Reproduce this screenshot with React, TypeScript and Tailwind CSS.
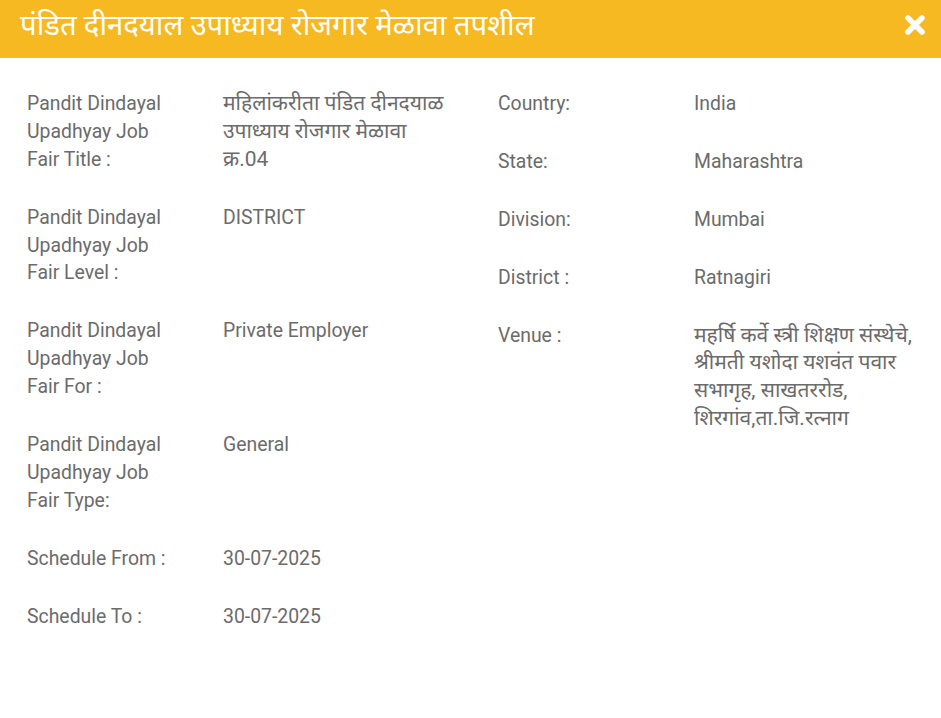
import React from 'react';

type Row = { label: string[]; value: string[]; deva?: boolean };

const left: Row[] = [
  {
    label: ['Pandit Dindayal', 'Upadhyay Job', 'Fair Title :'],
    value: ['महिलांकरीता पंडित दीनदयाळ', 'उपाध्याय रोजगार मेळावा', 'क्र.04'],
    deva: true,
  },
  { label: ['Pandit Dindayal', 'Upadhyay Job', 'Fair Level :'], value: ['DISTRICT'] },
  { label: ['Pandit Dindayal', 'Upadhyay Job', 'Fair For :'], value: ['Private Employer'] },
  { label: ['Pandit Dindayal', 'Upadhyay Job', 'Fair Type:'], value: ['General'] },
  { label: ['Schedule From :'], value: ['30-07-2025'] },
  { label: ['Schedule To :'], value: ['30-07-2025'] },
];

const right: Row[] = [
  { label: ['Country:'], value: ['India'] },
  { label: ['State:'], value: ['Maharashtra'] },
  { label: ['Division:'], value: ['Mumbai'] },
  { label: ['District :'], value: ['Ratnagiri'] },
  {
    label: ['Venue :'],
    value: ['महर्षि कर्वे स्त्री शिक्षण संस्थेचे,', 'श्रीमती यशोदा यशवंत पवार', 'सभागृह, साखतररोड,', 'शिरगांव,ता.जि.रत्नाग'],
    deva: true,
  },
];

function DetailRow({ row }: { row: Row }) {
  return (
    <div className="flex mb-[30px]">
      <div className="w-[196px] shrink-0">
        {row.label.map((l, i) => (
          <div key={i} className="h-[27.9px]">{l}</div>
        ))}
      </div>
      <div className="flex-1">
        {row.value.map((v, i) => (
          <div key={i} className={row.deva ? 'h-[27.9px] whitespace-nowrap text-[21px]' : 'h-[27.9px] whitespace-nowrap'}>
            {v}
          </div>
        ))}
      </div>
    </div>
  );
}

export default function App() {
  return (
    <div
      className="w-[941px] h-[718px] bg-white overflow-hidden"
      style={{ fontFamily: 'Roboto, "Noto Sans", "Noto Sans Devanagari", sans-serif' }}
    >
      <div className="h-[58px] bg-[#f6b921] flex items-center justify-between pl-[20px] pr-[16px]">
        <h4 className="text-white text-[29.3px] leading-none -mt-[6px]">पंडित दीनदयाल उपाध्याय रोजगार मेळावा तपशील</h4>
        <button className="text-white -mt-[8px]" aria-label="close">
          <svg width="20" height="20" viewBox="0 0 20 20">
            <path d="M3 3 L17 17 M17 3 L3 17" stroke="white" strokeWidth="5.5" strokeLinecap="round" />
          </svg>
        </button>
      </div>
      <div className="flex pt-[32px] text-[19.4px] leading-[27.9px] text-[#6b6b6b]">
        <div className="w-[472px] pl-[27px]">
          {left.map((r, i) => (
            <DetailRow key={i} row={r} />
          ))}
        </div>
        <div className="w-[469px] pl-[26px]">
          {right.map((r, i) => (
            <DetailRow key={i} row={r} />
          ))}
        </div>
      </div>
    </div>
  );
}
